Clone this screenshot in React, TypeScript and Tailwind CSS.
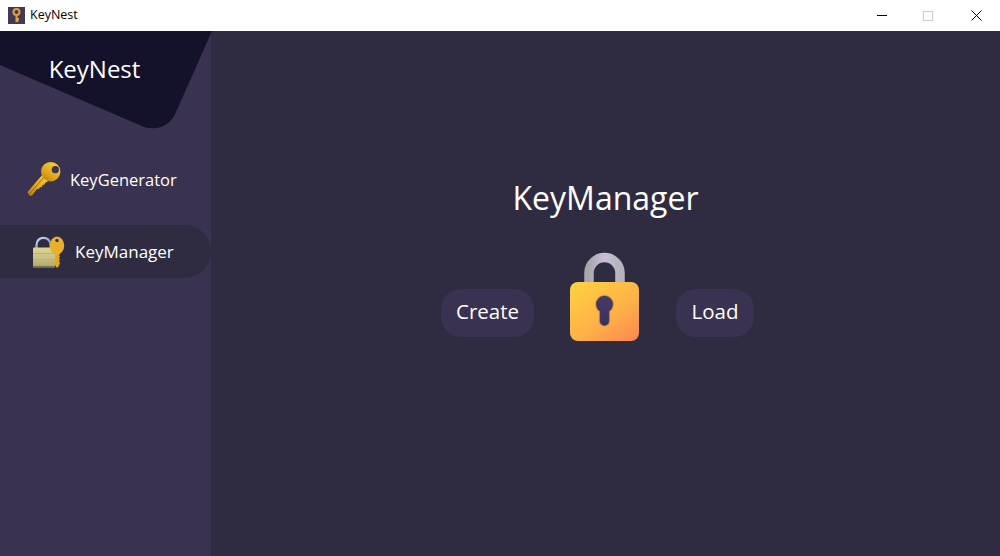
import React from "react";

function KeyIcon() {
  return (
    <svg width="36" height="36" viewBox="0 0 36 36" className="shrink-0">
      <defs>
        <linearGradient id="kg" x1="0.8" y1="0" x2="0.1" y2="1">
          <stop offset="0" stopColor="#fbd22f" />
          <stop offset="0.55" stopColor="#e3a91c" />
          <stop offset="1" stopColor="#b97f0c" />
        </linearGradient>
      </defs>
      <path d="M0.5 30 L16 12 L22 18 L20 20 L18.5 20.5 L17.5 22.5 L15.5 23 L15 25 L13 25 L12 27 L10 27 L5 33.5 L2.5 33.5 Z" fill="url(#kg)" />
      <path d="M2 32.5 L17 15" stroke="#9a6c0a" strokeWidth="1" />
      <circle cx="23.7" cy="9.7" r="9.7" fill="url(#kg)" />
      <circle cx="28.3" cy="7.7" r="3.6" fill="#393250" />
    </svg>
  );
}

function LockKeyIcon() {
  return (
    <svg width="36" height="36" viewBox="0 0 36 36" className="shrink-0">
      <defs>
        <linearGradient id="lb" x1="0" y1="0" x2="0" y2="1">
          <stop offset="0" stopColor="#dcd596" />
          <stop offset="0.6" stopColor="#c8bf7c" />
          <stop offset="1" stopColor="#a9a46c" />
        </linearGradient>
        <linearGradient id="ls" x1="0" y1="0" x2="1" y2="1">
          <stop offset="0" stopColor="#d2dfec" />
          <stop offset="1" stopColor="#5a85b5" />
        </linearGradient>
      </defs>
      <path d="M5.5 14 V11 C5.5 1.5 19.5 1.5 19.5 11 V14" fill="none" stroke="url(#ls)" strokeWidth="2.2" />
      <rect x="2" y="13.5" width="22" height="20" rx="1" fill="url(#lb)" />
      <rect x="2" y="32" width="22" height="1.5" fill="#74704a" />
      <rect x="2" y="19" width="22" height="1" fill="#bdb475" />
      <rect x="2" y="25" width="22" height="1" fill="#bdb475" />
      <path d="M24 17 H29 V20 L28 21 L29 22.5 L28 24 L29 25.5 L28 27 L29 29 L27 33.5 L25.5 33.5 L24 31 Z" fill="#e5a824" />
      <ellipse cx="26" cy="11.5" rx="7.2" ry="9" fill="#ebb02a" />
      <circle cx="26" cy="6.5" r="1.7" fill="#393250" />
    </svg>
  );
}

function BigLock() {
  return (
    <svg width="70" height="90" viewBox="0 0 70 90" className="shrink-0">
      <defs>
        <linearGradient id="body" x1="0.1" y1="0" x2="0.9" y2="1">
          <stop offset="0" stopColor="#ffd040" />
          <stop offset="0.6" stopColor="#feb048" />
          <stop offset="1" stopColor="#fc8a50" />
        </linearGradient>
        <linearGradient id="sh" x1="0" y1="0" x2="1" y2="0">
          <stop offset="0" stopColor="#a9a7ae" />
          <stop offset="0.5" stopColor="#c9bfd6" />
          <stop offset="1" stopColor="#b6b4ba" />
        </linearGradient>
        <linearGradient id="hole" x1="0" y1="0" x2="0" y2="1">
          <stop offset="0" stopColor="#453a66" />
          <stop offset="1" stopColor="#3d2f5c" />
        </linearGradient>
      </defs>
      <path d="M19 34 V22 A15.5 15.5 0 0 1 50 22 V34" fill="none" stroke="url(#sh)" strokeWidth="9.5" />
      <rect x="0" y="31" width="69" height="59" rx="8" fill="url(#body)" />
      <path d="M29.5 60.5 A8.8 8.8 0 1 1 39.5 60.5 L39.5 70 A5 5 0 0 1 29.5 70 Z" fill="url(#hole)" stroke="#e0873a" strokeOpacity="0.5" strokeWidth="1.2" />
    </svg>
  );
}

export default function App() {
  return (
    <div className="flex h-[556px] w-[1000px] flex-col overflow-hidden font-['Open_Sans','Noto_Sans',sans-serif]">
      <header className="flex h-[31px] shrink-0 items-center justify-between bg-white">
        <div className="flex items-center gap-[5px] pl-2">
          <div className="flex h-[17px] w-[17px] items-center justify-center bg-[#413a50]">
            <svg width="9" height="15" viewBox="0 0 9 15">
              <circle cx="4.5" cy="4" r="3" fill="none" stroke="#dca24a" strokeWidth="2" />
              <path d="M4.5 7 V14 M4.5 11 H7 M4.5 13 H6.5" stroke="#dca24a" strokeWidth="2" />
            </svg>
          </div>
          <span className="text-[12.5px] text-black">KeyNest</span>
        </div>
        <div className="flex h-full items-center">
          <div className="flex h-full w-[46px] items-center justify-center pr-[5px]">
            <div className="h-px w-[10px] bg-black" />
          </div>
          <div className="flex h-full w-[46px] items-center justify-center pr-[4px]">
            <div className="h-[10px] w-[10px] border border-[#cccccc]" />
          </div>
          <div className="flex h-full w-[47px] items-center justify-center">
            <svg width="11" height="11" viewBox="0 0 11 11">
              <path d="M0.5 0.5 L10.5 10.5 M10.5 0.5 L0.5 10.5" stroke="#000" strokeWidth="1" />
            </svg>
          </div>
        </div>
      </header>

      <div className="flex flex-1">
        <aside className="relative flex w-[211px] shrink-0 flex-col bg-[#393250]">
          <svg width="213" height="100" viewBox="0 0 213 100" className="absolute left-0 top-0">
            <path d="M0 34 L137 93 C152 101 169 98 176 81 L212 0 L0 0 Z" fill="#14112a" />
          </svg>
          <div className="relative flex h-[118px] justify-center pr-[22px] pt-[19px] text-[24px] leading-[38px] text-white">
            KeyNest
          </div>
          <div className="flex h-[62px] items-center gap-[7px] pl-[27px] text-[16.5px] text-white">
            <KeyIcon />
            <span>KeyGenerator</span>
          </div>
          <div className="mt-[14px] flex h-[53px] items-center gap-[8px] rounded-r-[27px] bg-[#2f2c42] pl-[31px] text-[17px] text-white">
            <LockKeyIcon />
            <span>KeyManager</span>
          </div>
        </aside>

        <main className="flex flex-1 flex-col items-center bg-[#2f2c42] pt-[145px]">
          <h1 className="text-[32px] font-normal leading-[44px] text-white">KeyManager</h1>
          <div className="mr-[16px] mt-[31px] flex items-end">
            <button className="mb-[4px] h-[48px] w-[93px] rounded-[20px] bg-[#393250] pb-[3px] text-[20.5px] text-white">Create</button>
            <div className="ml-[36px] mr-[36px]">
              <BigLock />
            </div>
            <button className="mb-[4px] h-[48px] w-[78px] rounded-[20px] bg-[#393250] pb-[3px] text-[20.5px] text-white">Load</button>
          </div>
        </main>
      </div>
    </div>
  );
}
